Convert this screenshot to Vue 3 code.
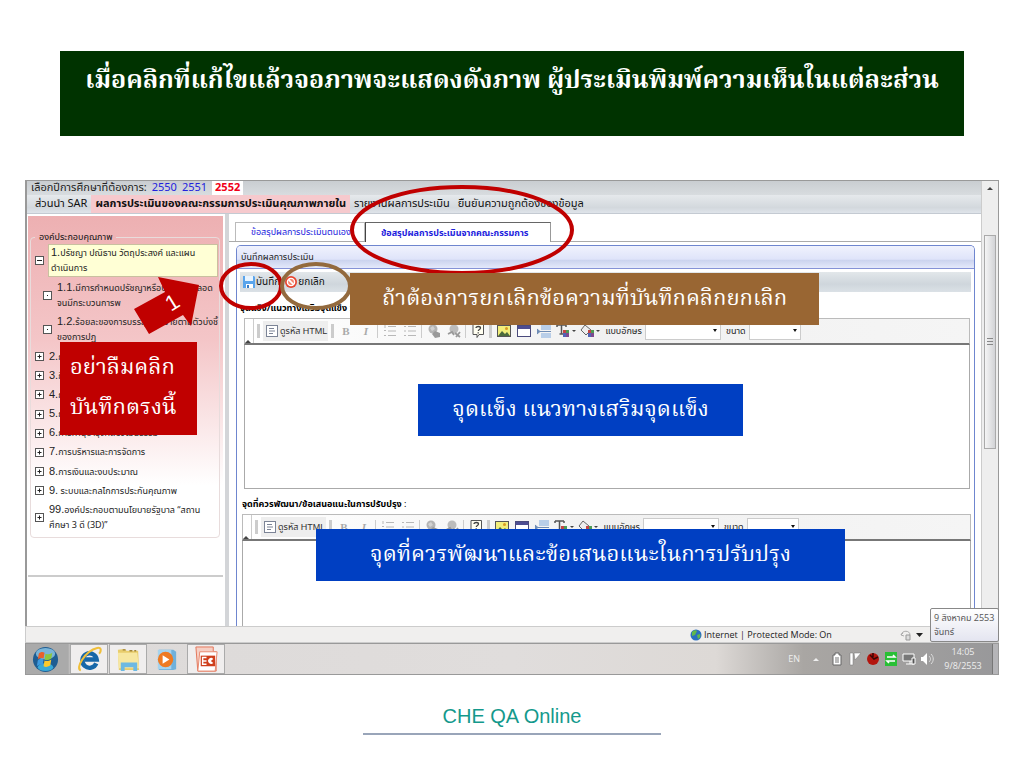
<script setup>
import { ref } from 'vue'

const years = ['2550', '2551', '2552']
const yearActive = ref('2552')

const menu = ['ส่วนนำ SAR', 'ผลการประเมินของคณะกรรมการประเมินคุณภาพภายใน', 'รายงานผลการประเมิน', 'ยืนยันความถูกต้องของข้อมูล']
const menuActive = ref(1)

const tabs = ['ข้อสรุปผลการประเมินตนเอง', 'ข้อสรุปผลการประเมินจากคณะกรรมการ']
const tabActive = ref(1)

const tree = [
  { sign: 'minus', no: '1.', text: 'ปรัชญา ปณิธาน วัตถุประสงค์ และแผน\nดำเนินการ', selected: true },
  { sign: 'dot', no: '1.1.', text: 'มีการกำหนดปรัชญาหรือปณิธาน ตลอด\nจนมีกระบวนการพ', child: true },
  { sign: 'dot', no: '1.2.', text: 'ร้อยละของการบรรลุเป้าหมายตามตัวบ่งชี้\nของการปฏ', child: true },
  { sign: 'plus', no: '2.', text: 'ก' },
  { sign: 'plus', no: '3.', text: 'กิ' },
  { sign: 'plus', no: '4.', text: 'ก' },
  { sign: 'plus', no: '5.', text: 'ก' },
  { sign: 'plus', no: '6.', text: 'การทำนุบำรุงศิลปวัฒนธรรม' },
  { sign: 'plus', no: '7.', text: 'การบริหารและการจัดการ' },
  { sign: 'plus', no: '8.', text: 'การเงินและงบประมาณ' },
  { sign: 'plus', no: '9.', text: ' ระบบและกลไกการประกันคุณภาพ' },
  { sign: 'plus', no: '99.', text: 'องค์ประกอบตามนโยบายรัฐบาล “สถาน\nศึกษา 3 ดี (3D)”' }
]

const editors = [
  { id: 'strong', label: 'จุดแข็ง/แนวทางเสริมจุดแข็ง' },
  { id: 'improve', label: 'จุดที่ควรพัฒนา/ข้อเสนอแนะในการปรับปรุง' }
]
</script>

<template>
  <main class="slide">
    <h1 class="slide-title">เมื่อคลิกที่แก้ไขแล้วจอภาพจะแสดงดังภาพ ผู้ประเมินพิมพ์ความเห็นในแต่ละส่วน</h1>

    <section class="screen">
      <div class="viewport">
        <div class="page">
          <nav class="year-row">
            <span>เลือกปีการศึกษาที่ต้องการ:</span>
            <a v-for="y in years" :key="y" href="#" :class="{ active: y === yearActive }" @click.prevent="yearActive = y">{{ y }}</a>
          </nav>
          <nav class="menu-row">
            <a v-for="(m, i) in menu" :key="m" href="#" :class="{ active: i === menuActive }" @click.prevent="menuActive = i">{{ m }}</a>
          </nav>

          <div class="columns">
            <aside class="sidebar">
              <div class="side-panel">
                <fieldset class="tree-box">
                  <legend>องค์ประกอบคุณภาพ</legend>
                  <ul class="tree">
                    <li v-for="item in tree" :key="item.no" :class="{ child: item.child, selected: item.selected }">
                      <svg class="sign" viewBox="0 0 9 9">
                        <rect x=".5" y=".5" width="8" height="8" fill="#fff" stroke="#555" />
                        <path v-if="item.sign === 'minus'" d="M2 4.5h5" stroke="#222" />
                        <path v-else-if="item.sign === 'plus'" d="M2.5 4.5h4M4.5 2.5v4" stroke="#222" />
                        <path v-else d="M4 4.5h1" stroke="#222" />
                      </svg>
                      <span class="node"><span class="no">{{ item.no }}</span>{{ item.text }}</span>
                    </li>
                  </ul>
                </fieldset>
              </div>
            </aside>

            <div class="content">
              <div class="tabs">
                <button v-for="(t, i) in tabs" :key="t" type="button" :class="['tab', { active: i === tabActive }]" @click="tabActive = i">{{ t }}</button>
              </div>

              <div class="panel">
                <h2 class="panel-title">บันทึกผลการประเมิน</h2>
                <div class="actions">
                  <button type="button">
                    <svg viewBox="0 0 14 14" width="14" height="14">
                      <path d="M1 1h11l1 1v11H1z" fill="#5aa5ec" />
                      <path d="M3 1h8v5H3z" fill="#e8f4ff" />
                      <path d="M4 9h7v4H4z" fill="#fff" />
                      <path d="M5 10h2v3H5z" fill="#3a7cc4" />
                    </svg>บันทึก
                  </button>
                  <button type="button">
                    <svg viewBox="0 0 14 14" width="14" height="14">
                      <circle cx="7" cy="7" r="6" fill="#e8452f" />
                      <circle cx="7" cy="7" r="3.6" fill="#f4876f" stroke="#fff" stroke-width="1.4" />
                      <path d="M4.6 4.6l4.8 4.8" stroke="#fff" stroke-width="1.6" />
                    </svg>ยกเลิก
                  </button>
                </div>

                <div v-for="e in editors" :key="e.id" :class="['field', e.id]">
                  <label class="field-label" :for="e.id"><b>{{ e.label }}</b> :</label>
                  <div class="editor-bar">
                    <span class="corner"></span>
                    <i class="grip"></i>
                    <button type="button" class="html-btn">
                      <svg viewBox="0 0 12 12" width="12" height="12" fill="none" stroke="#7c8496">
                        <rect x=".5" y=".5" width="11" height="11" fill="#fff" />
                        <path d="M3 3.5h5M3 6h6M3 8.5h4" />
                      </svg>ดูรหัส HTML
                    </button>
                    <i class="grip"></i>
                    <button type="button" class="glyph bold">B</button>
                    <button type="button" class="glyph italic">I</button>
                    <i class="sep"></i>
                    <button type="button" class="glyph" aria-label="รายการลำดับเลข">
                      <svg viewBox="0 0 14 14" fill="none" stroke="#b8b8b8"><path d="M5 2.5h8M5 7h8M5 11.5h8M2 1v3M1 6.5h2M1 11.5h2" /></svg>
                    </button>
                    <button type="button" class="glyph" aria-label="รายการ">
                      <svg viewBox="0 0 14 14" fill="none" stroke="#b8b8b8"><path d="M5 2.5h8M5 7h8M5 11.5h8M1 2.5h2M1 7h2M1 11.5h2" /></svg>
                    </button>
                    <i class="sep"></i>
                    <button type="button" class="glyph" aria-label="ลิงก์">
                      <svg viewBox="0 0 14 14"><circle cx="6" cy="5" r="4.5" fill="#b4b4b4" /><path d="M3 4l3-2 2 3-3 2z" fill="#d2d2d2" /><path d="M5 10l3-3 5 2v4l-5 1z" fill="#999" /></svg>
                    </button>
                    <button type="button" class="glyph" aria-label="ยกเลิกลิงก์">
                      <svg viewBox="0 0 14 14"><circle cx="7" cy="5" r="4.5" fill="#bcbcbc" /><path d="M1 10l4-2 2 3M8 9l5 4M13 8l-4 5" stroke="#999" stroke-width="1.8" fill="none" /></svg>
                    </button>
                    <i class="sep"></i>
                    <button type="button" class="glyph" aria-label="ช่วยเหลือ">
                      <svg viewBox="0 0 14 14" fill="none"><path d="M2 .5h10.5v10H8l-2 3v-3H2z" fill="#fffef0" stroke="#555" /><path d="M5 4c0-2 4.5-2 4.5 0 0 1.5-2.2 1.5-2.2 3M7.2 8.2v1.2" stroke="#444" stroke-width="1.3" /></svg>
                    </button>
                    <i class="grip"></i>
                    <button type="button" class="glyph" aria-label="รูปภาพ">
                      <svg viewBox="0 0 14 14"><rect x=".5" y="1.5" width="13" height="11" fill="#f2ee7a" stroke="#555" /><path d="M1 12l4-5 3 3 2-2 3 4z" fill="#4b6b3c" /><circle cx="9.5" cy="4.5" r="1.5" fill="#d99a23" /></svg>
                    </button>
                    <button type="button" class="glyph" aria-label="ตาราง">
                      <svg viewBox="0 0 14 14"><rect x=".5" y="1.5" width="13" height="11" fill="#fff" stroke="#4a4a7c" /><path d="M1 2h12v3H1z" fill="#4d4d92" /></svg>
                    </button>
                    <button type="button" class="glyph" aria-label="เส้นคั่น">
                      <svg viewBox="0 0 14 14"><path d="M4 0h10v6H4zM4 9h10v5H4z" fill="#b9cee8" /><path d="M3 7.5h11M0 5l3 2.5L0 10z" stroke="#6f8cb5" fill="#6f8cb5" /></svg>
                    </button>
                    <button type="button" class="glyph wide" aria-label="สีตัวอักษร">
                      <svg viewBox="0 0 20 14"><path d="M1 1h9M5.5 1v9M3.5 10h4M1 1v2M10 1v2" stroke="#555" stroke-width="1.5" /><path d="M7 6h3v3H7z" fill="#c24545" /><path d="M10 6h3v3h-3z" fill="#4c9b55" /><path d="M7 9h3v4H7z" fill="#5163b5" /><path d="M10 9h3v4h-3z" fill="#7d4a8e" /><path d="M16 6h4l-2 2z" fill="#444" /></svg>
                    </button>
                    <button type="button" class="glyph wide" aria-label="สีพื้นหลัง">
                      <svg viewBox="0 0 20 14"><path d="M5 1l6 5-5 5-5-5z" fill="#eee" stroke="#666" /><path d="M8 6h3v3H8z" fill="#c24545" /><path d="M11 6h3v3h-3z" fill="#4c9b55" /><path d="M8 9h3v4H8z" fill="#5163b5" /><path d="M11 9h3v4h-3z" fill="#7d4a8e" /><path d="M16 6h4l-2 2z" fill="#444" /></svg>
                    </button>
                    <label class="pick" :for="e.id + '-font'">แบบอักษร</label>
                    <span class="drop font"><select :id="e.id + '-font'"><option></option></select></span>
                    <label class="pick" :for="e.id + '-size'">ขนาด</label>
                    <span class="drop"><select :id="e.id + '-size'"><option></option></select></span>
                  </div>
                  <textarea :id="e.id"></textarea>
                </div>
              </div>
            </div>
          </div>
        </div>
        <div class="scrollbar">
          <span class="up"></span>
          <span class="thumb"></span>
        </div>
      </div>

      <div class="statusbar">
        <svg viewBox="0 0 12 12" width="12" height="12">
          <circle cx="6" cy="6" r="5.5" fill="#2b6fc0" />
          <path d="M2 3c2-2 4-2 5-1L5 6 2 7zM7 6l3-1c1 2 0 4-2 5z" fill="#62b84b" />
        </svg>
        <span>Internet | Protected Mode: On</span>
        <svg class="zone" viewBox="0 0 24 12" width="24" height="12">
          <path d="M1 6c1-5 9-5 9 0M1 6l2-2M1 6l3 1" fill="none" stroke="#aaa" />
          <path d="M6 6h4v5H6z" fill="#ddd" stroke="#999" />
          <path d="M16 4h7l-3.5 4z" fill="#222" />
        </svg>
      </div>

      <div class="taskbar">
        <button type="button" class="start" aria-label="Start">
          <svg viewBox="0 0 28 28">
            <circle cx="14" cy="14" r="13" fill="#1f5d92" />
            <ellipse cx="14" cy="8" rx="10" ry="6" fill="#79b4d8" />
            <ellipse cx="14" cy="22" rx="8" ry="4" fill="#38a9d8" />
            <path d="M7 8c2-2 4-2 6-1l-1 6c-2-1-4-1-6 1z" fill="#e9602a" />
            <path d="M14 8c2 1 4 1 7-1l-1 6c-3 2-5 2-7 1z" fill="#8cc63f" />
            <path d="M6 15c2-2 4-2 6-1l-1 6c-2-1-4-1-6 1z" fill="#3f9be0" />
            <path d="M13 15c2 1 4 1 7-1l-1 6c-3 2-5 2-7 1z" fill="#fbc92d" />
          </svg>
        </button>
        <button type="button" class="task open" aria-label="Internet Explorer">
          <svg viewBox="0 0 28 28">
            <path d="M21 18a7.5 7.5 0 1 1 .5-4H9" fill="none" stroke="#1767a8" stroke-width="4.5" />
            <path d="M5 25C-1 24 9 5 22 2c5-1 4 4 2 6" fill="none" stroke="#f0bf3a" stroke-width="2.2" />
          </svg>
        </button>
        <button type="button" class="task open" aria-label="Explorer">
          <svg viewBox="0 0 28 28">
            <path d="M3 4l7-1 2 2h12l1 20H4z" fill="#e8cd6c" />
            <path d="M3 7h20l2 16H4z" fill="#f7e7a0" />
            <path d="M6 26V17h17v9h-4v-4h-9v4z" fill="#6db9e2" />
            <path d="M8 4h3M15 5h3M20 5h2" stroke="#a08338" stroke-width="1.5" />
          </svg>
        </button>
        <button type="button" class="task" aria-label="Media Player">
          <svg viewBox="0 0 28 28">
            <path d="M6 4h15l3 2v18l-3 1H6z" fill="#6fb1dc" />
            <path d="M5 4h14v20H5z" fill="#a5d3ee" />
            <circle cx="13" cy="14" r="8" fill="#ee7a22" />
            <path d="M10 9.500l7 4.500-7 4.500z" fill="#fff" />
          </svg>
        </button>
        <button type="button" class="task open" aria-label="PowerPoint">
          <svg viewBox="0 0 28 28">
            <path d="M3 1h18v5h3v20H5z" fill="#f6cfc4" stroke="#e27457" />
            <path d="M7 6h18l-2 20H5z" fill="#fff" stroke="#e8886e" />
            <rect x="8" y="10" width="15" height="11" fill="#cf3f1c" />
            <path d="M14 12h-4v7h4M10 15.500h4" fill="none" stroke="#fff" stroke-width="1.500" />
            <path d="M21 13.500a3 3 0 1 0 0 4l-2.500-2z" fill="#fff" />
          </svg>
        </button>
        <div class="tray">
          <span class="lang">EN</span>
          <svg viewBox="0 0 8 8" width="8" height="8"><path d="M1 6h6L4 3z" fill="#eee" /></svg>
          <svg class="first" viewBox="0 0 14 14" width="14" height="14"><path d="M5 1h4v2h2v10H3V3h2z" fill="#fff" stroke="#666" /><path d="M5 6h4M5 8h4M5 10h4" stroke="#777" /></svg>
          <svg viewBox="0 0 14 14" width="14" height="14"><path d="M2 13V1h3v12zM6 1h7L7 8z" fill="#fff" stroke="#777" stroke-width=".5" /></svg>
          <svg viewBox="0 0 14 14" width="14" height="14"><circle cx="7" cy="7" r="6" fill="#b3150e" /><path d="M4 3l4 4 4-2M7 1v4" stroke="#3a0603" stroke-width="1.5" fill="none" /></svg>
          <svg viewBox="0 0 14 14" width="14" height="14"><rect x="1" y="0" width="12" height="14" fill="#28bf35" /><path d="M3 5h8L9 3M11 9H3l2 2" stroke="#fff" stroke-width="1.5" fill="none" /></svg>
          <svg viewBox="0 0 14 14" width="14" height="14"><path d="M1 2h11v7H1zM4 12h8M8 9v3" fill="#777" stroke="#fff" /><path d="M10 6h3v6h-3z" fill="#555" stroke="#fff" /></svg>
          <svg viewBox="0 0 14 14" width="14" height="14"><path d="M1 5h2l4-4v12L3 9H1z" fill="#fff" /><path d="M9 4c2 2 2 4 0 6M11 2c3 3 3 7 0 10" stroke="#ddd" fill="none" /></svg>
          <div class="clock"><span>14:05</span><span>9/8/2553</span></div>
          <span class="peek"></span>
        </div>
      </div>
      <div class="date-tip">9 สิงหาคม 2553<br>จันทร์</div>

      <!-- call-outs laid over the screen -->
      <p class="note red">อย่าลืมคลิก<br>บันทึกตรงนี้</p>
      <svg class="marks" viewBox="0 0 974 495" fill="none">
        <ellipse cx="437" cy="50" rx="110" ry="43" stroke="#c00000" stroke-width="4" />
        <ellipse cx="226" cy="106" rx="30" ry="22" stroke="#c00000" stroke-width="4" />
        <ellipse cx="291" cy="106" rx="34" ry="22" stroke="#936a3e" stroke-width="4" />
        <path d="M133 97l41 8-8 41-8-11-34 19-15-25 31-17z" fill="#c00000" />
        <text x="147" y="130" transform="rotate(-32 147 122)" text-anchor="middle" font-size="22" fill="#fff">1</text>
      </svg>
      <p class="note brown">ถ้าต้องการยกเลิกข้อความที่บันทึกคลิกยกเลิก</p>
      <p class="note blue first">จุดแข็ง แนวทางเสริมจุดแข็ง</p>
      <p class="note blue second">จุดที่ควรพัฒนาและข้อเสนอแนะในการปรับปรุง</p>
    </section>

    <footer class="slide-footer">CHE QA Online</footer>
  </main>
</template>

<style>
body { margin: 0; background: #fff; }
</style>

<style scoped>
* { box-sizing: border-box; }
.slide { padding-top: 51px; font-family: "Liberation Sans", "Noto Sans Thai", sans-serif; }
.slide-title {
  margin: 0 60px 44px; padding: 10px 12px 0; min-height: 85px; background: #003300; color: #fff;
  font: bold 25px/40px Norasi, "Noto Serif Thai", serif; text-align: center; white-space: nowrap;
}

/* Captured screen */
.screen { position: relative; margin: 0 25px; font-size: 12px; color: #222; }
.viewport { display: flex; height: 446px; overflow: hidden; border: solid #999; border-width: 1px 1px 0 2px; }
.page { flex: 1; min-width: 0; display: flex; flex-direction: column; }
button { border: 0; background: none; padding: 0; margin: 0; font: inherit; color: inherit; }
a { text-decoration: none; }
svg { display: block; flex-shrink: 0; }

.year-row { display: flex; align-items: center; gap: 5px; height: 14px; padding-left: 4px; background: linear-gradient(#c9cdd1, #d8dcdf); line-height: 14px; white-space: nowrap; font-family: "Noto Sans Thai", "DejaVu Sans", sans-serif; font-size: 11px; }
.year-row a { color: #22d; }
.year-row a.active { padding: 0 3px; background: #fff; color: #f00018; font-weight: bold; }
.menu-row { display: flex; height: 19px; border-bottom: 1px solid #c4cad2; background: linear-gradient(#e6e9ec, #d3d8dd 70%, #dfe4ea); font: 11px/18px "Noto Sans Thai", "DejaVu Sans", sans-serif; white-space: nowrap; }
.menu-row a { padding: 0 4px; color: #111; }
.menu-row a:first-child { padding-left: 8px; }
.menu-row a.active { background: #f6c9cd; font-weight: bold; }

.columns { flex: 1; display: flex; min-height: 0; }
.sidebar { width: 202px; padding: 2px 2px 0 1px; border-right: 4px solid #d3d5d8; background: #fff; }
.side-panel { height: 361px; padding: 14px 4px 0 2px; border-bottom: 2px solid #ccc; background: linear-gradient(#edb0b2, #f4c6c8 35%, #fff 75%); }
.tree-box { margin: 0; padding: 0 1px 4px 4px; border: 1px solid #e8dcdc; border-radius: 4px; height: 308px; }
.tree-box legend { padding: 0 4px; font: 9px/14px "Noto Sans Thai", sans-serif; color: #111; }
.tree { display: flex; flex-direction: column; justify-content: space-between; height: 289px; margin: 0; padding: 0; list-style: none; font: 9px/15px "Noto Sans Thai", sans-serif; }
.tree li { display: flex; align-items: center; gap: 4px; }
.node { padding-left: 1px; white-space: pre; }
.no { font: 11px/14px "Liberation Sans", sans-serif; }
.tree li.child { padding-left: 8px; }
.tree li.selected .node { flex: 1; padding: 0 2px; background: #ffffd5; border: 1px solid #c9c0a0; }
.sign { width: 9px; height: 9px; }

.content { flex: 1; min-width: 0; display: flex; flex-direction: column; padding-top: 8px; }
.tabs { display: flex; align-items: flex-end; height: 20px; padding-left: 6px; border-bottom: 1px solid #aaa; }
.tab { width: 130px; height: 19px; padding: 0 15px; border: 1px solid #bbb; border-bottom: 0; color: #22d; font: 9px/18px "Noto Sans Thai", sans-serif; text-align: left; white-space: nowrap; }
.tab.active { width: 186px; height: 20px; margin-bottom: -1px; border-color: #666 #999 #fff #444; background: #fff; font-weight: bold; }

.panel { flex: 1; min-height: 0; margin: 3px 6px 0 7px; border: 1px solid #6f86cf; border-bottom: 0; border-radius: 5px 5px 0 0; overflow: hidden; }
.panel-title { margin: 0; height: 23px; padding-left: 4px; border-bottom: 1px solid #8592d6; background: linear-gradient(#f0f2fd, #dfe4fa 60%, #cbd3ee 65%, #e4e9fb); font: 9px/23px "Noto Sans Thai", sans-serif; }
.actions { display: flex; align-items: center; gap: 4px; height: 20px; margin: 3px 3px 7px; padding-left: 2px; background: linear-gradient(#e2e7ea, #cfd6dc 60%, #dbe1e6); font: 10px/20px "Noto Sans Thai", sans-serif; }
.actions button { display: flex; align-items: center; color: #111; }

.field { padding: 0 4px 0 7px; }
.field-label { display: block; height: 19px; font: 9px/19px "Noto Sans Thai", sans-serif; color: #000; }
.field.strong .field-label { margin-left: -4px; }
.editor-bar { display: flex; align-items: center; gap: 3px; height: 27px; border: solid #bbb; border-width: 1px 1px 2px; border-bottom-color: #777; background: linear-gradient(90deg, #fff, #f1f1f1 50%, #f5f5f5); }
.corner { align-self: stretch; width: 9px; border-right: 1px solid #ccc; display: flex; align-items: flex-end; }
.corner::after { content: ""; border: 3px solid transparent; border-bottom-color: #444; border-top: 0; }
.grip { width: 3px; height: 14px; background: #ccc; }
.sep { width: 1px; height: 14px; background: #ccc; }
.html-btn { display: flex; align-items: center; gap: 2px; height: 20px; padding: 0 1px 0 3px; background: #eee; font: 9px/20px "Liberation Sans", "Noto Sans Thai", sans-serif; color: #333; white-space: nowrap; }
.glyph { display: flex; align-items: center; justify-content: center; width: 17px; height: 18px; font: bold 11px/18px "Liberation Serif", serif; color: #aaa; }
.glyph svg { width: 14px; height: 14px; }
.glyph.wide { width: 21px; }
.glyph.wide svg { width: 20px; }
.italic { font-style: italic; }
.pick { padding-left: 2px; font: 9px/18px "Noto Sans Thai", sans-serif; white-space: nowrap; }
.drop { position: relative; width: 52px; height: 18px; }
.drop.font { width: 76px; }
.drop select { display: block; width: 100%; height: 100%; border: 1px solid #ccc; border-radius: 0; background: #fff; appearance: none; }
.drop::after { content: ""; position: absolute; right: 4px; top: 7px; border: 2px solid transparent; border-top: 3px solid #111; pointer-events: none; }
textarea { display: block; width: 100%; height: 144px; border: solid #aaa; border-width: 0 1px 1px; background: #fff; resize: none; outline: 0; }
.field + .field { padding: 6px 3px 0 5px; }

.scrollbar { width: 17px; background: #eee; border-left: 1px solid #ccc; display: flex; flex-direction: column; align-items: center; }
.up { margin-top: 6px; border: 3px solid transparent; border-top: 0; border-bottom-color: #444; }
.thumb { width: 12px; height: 214px; margin-top: 45px; border: 1px solid #aaa; background: repeating-linear-gradient(#888 0 1px, transparent 1px 3px) center / 6px 8px no-repeat, linear-gradient(90deg, #f5f5f5, #d2d3d6); }

.statusbar { display: flex; align-items: center; gap: 2px; height: 17px; padding-left: 664px; border: 1px solid #ccc; background: #f0efee; font: 9px/16px "Open Sans", sans-serif; white-space: nowrap; }
.statusbar .zone { margin-left: 66px; }
.taskbar { display: flex; height: 32px; border: 1px solid #999; background: linear-gradient(90deg, #aaa 0 42px, #dddad9 46px, #e0dddc 50%, #ddd9d6 71%, #a9a6a3 80%, #98989a); }
.start { width: 44px; padding-left: 6px; }
.start svg, .task svg { width: 27px; height: 27px; }
.task { width: 38px; margin-right: 1px; padding-left: 5px; }
.task.open { border: 1px solid #aaa; background: #f0eeee; }
.tray { display: flex; align-items: center; gap: 4px; margin-left: auto; color: #eee; }
.lang { margin-right: 8px; font: 9px/14px "Open Sans", sans-serif; }
.tray .first { margin-left: 6px; }
.clock { display: flex; flex-direction: column; align-items: center; width: 50px; font: 9px/14px "Open Sans", sans-serif; }
.peek { align-self: stretch; width: 6px; border-left: 1px solid #777; background: #b5b5b8; }
.date-tip { position: absolute; right: 0; bottom: 33px; width: 69px; height: 34px; padding: 2px 3px; border: 1px solid #888; border-radius: 2px; background: linear-gradient(#fff, #e4e5f0); font: 9px/14px "Open Sans", "Noto Sans Thai", sans-serif; color: #555; white-space: nowrap; }

/* Call-outs */
.marks { position: absolute; left: 0; top: 0; width: 974px; height: 495px; pointer-events: none; }
.note { position: absolute; margin: 0; color: #fff; font: 22px/40px Norasi, "Noto Serif Thai", serif; text-align: center; white-space: nowrap; }
.note.red { left: 35px; top: 162px; width: 137px; height: 93px; padding: 7px 10px; background: #c00000; text-align: left; }
.note.brown { left: 325px; top: 93px; width: 469px; height: 52px; padding-top: 7px; background: #996633; }
.note.blue { height: 52px; padding-top: 7px; background: #003fc2; }
.blue.first { left: 393px; top: 204px; width: 325px; }
.blue.second { left: 291px; top: 349px; width: 529px; }

.slide-footer { width: 298px; margin: 30px auto 0; padding-bottom: 6px; border-bottom: 2px solid #99a5b9; color: #14998c; font-size: 20px; line-height: 22px; text-align: center; }
</style>
